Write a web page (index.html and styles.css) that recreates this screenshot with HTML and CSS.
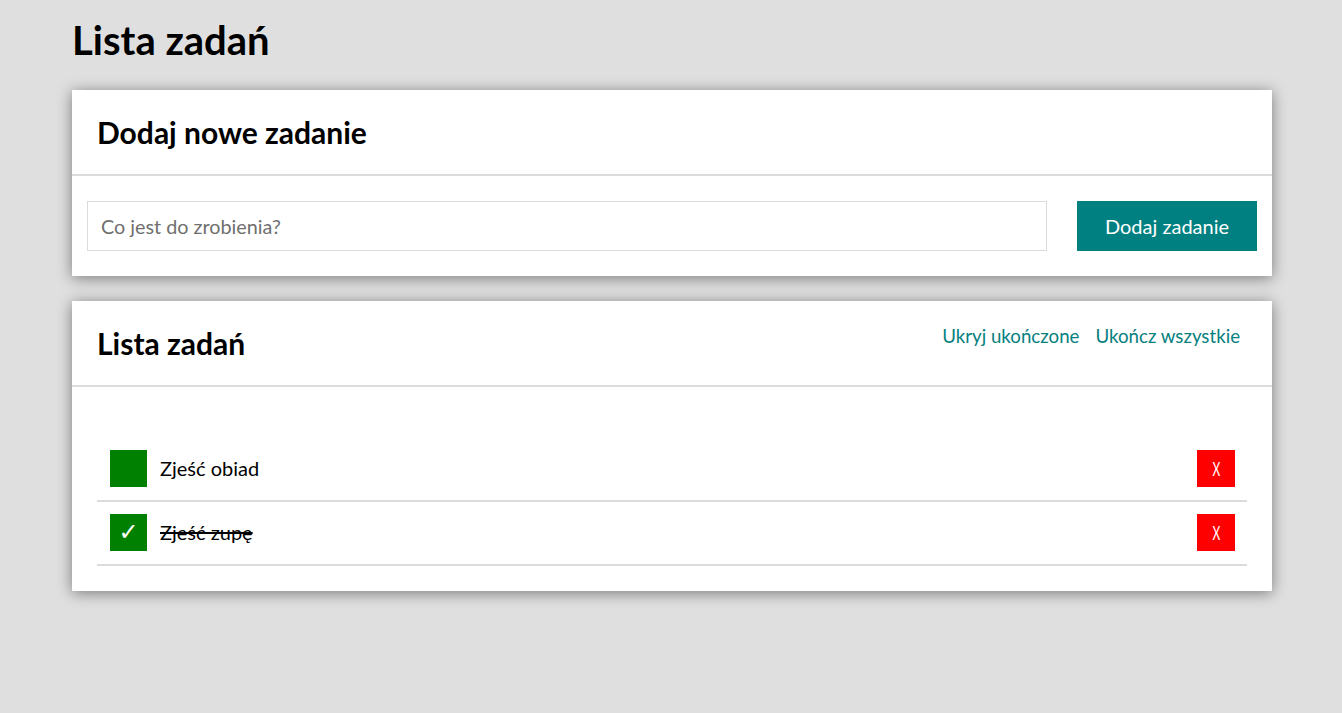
FILE: index.html
```html
<!DOCTYPE html>
<html lang="pl">
<head>
<meta charset="utf-8">
<title>Lista zadań</title>
<link rel="stylesheet" href="styles.css">
</head>
<body>
<main class="app">
  <h1 class="page-title">Lista zadań</h1>
  <section class="card">
    <header class="card-header">
      <h2 class="card-title">Dodaj nowe zadanie</h2>
    </header>
    <div class="card-body add-form">
      <input class="task-input" type="text" placeholder="Co jest do zrobienia?">
      <button class="btn-add" type="button">Dodaj zadanie</button>
    </div>
  </section>
  <section class="card">
    <header class="card-header">
      <h2 class="card-title">Lista zadań</h2>
      <nav class="actions">
        <a class="action" href="#">Ukryj ukończone</a>
        <a class="action" href="#">Ukończ wszystkie</a>
      </nav>
    </header>
    <div class="card-body list-body">
      <ul class="tasks">
        <li class="task">
          <button class="check" type="button"></button>
          <span class="task-name">Zjeść obiad</span>
          <button class="delete" type="button"><span class="x">X</span></button>
        </li>
        <li class="task done">
          <button class="check" type="button">✓</button>
          <span class="task-name">Zjeść zupę</span>
          <button class="delete" type="button"><span class="x">X</span></button>
        </li>
      </ul>
    </div>
  </section>
</main>
</body>
</html>
```
FILE: styles.css
```css
* { box-sizing: border-box; }
html, body { margin: 0; padding: 0; }
body {
  background: #dfdfdf;
  font-family: Lato, "Open Sans", sans-serif;
  color: #000;
}
.app {
  width: 1200px;
  margin: 0 0 0 72px;
  padding-top: 16px;
}
.page-title {
  margin: 0 0 26px 0;
  font-size: 40px;
  font-weight: 700;
  line-height: 48px;
}
.card {
  background: #fff;
  box-shadow: 0 2px 14px rgba(0,0,0,0.45);
  margin-bottom: 25px;
}
.card-header {
  display: flex;
  align-items: center;
  justify-content: space-between;
  height: 86px;
  padding: 0 32px 0 25px;
  border-bottom: 2px solid #dcdcdc;
}
.card-title {
  margin: 0;
  font-size: 30px;
  font-weight: 700;
}
.actions {
  display: flex;
  gap: 16px;
  margin-top: -14px;
}
.action {
  color: #078080;
  text-decoration: none;
  font-size: 18.7px;
}
.add-form {
  display: flex;
  gap: 30px;
  padding: 25px 15px;
}
.task-input {
  flex: 1;
  height: 50px;
  border: 1px solid #dcdcdc;
  padding: 0 13px;
  font-family: inherit;
  font-size: 19.8px;
  outline: none;
}
.task-input::placeholder { color: #6f6f6f; }
.btn-add {
  width: 180px;
  height: 50px;
  border: none;
  background: #008080;
  color: #fff;
  font-family: inherit;
  font-size: 20px;
}
.list-body {
  padding: 51px 25px 25px;
}
.tasks {
  list-style: none;
  margin: 0;
  padding: 0;
}
.task {
  display: flex;
  align-items: center;
  height: 64px;
  padding: 0 12px 2px 13px;
  border-bottom: 2px solid #dcdcdc;
}
.check {
  width: 37px;
  height: 37px;
  border: none;
  background: #008000;
  color: #fff;
  font-size: 24px;
  font-weight: 700;
  line-height: 37px;
  padding: 0;
  font-family: "DejaVu Sans", sans-serif;
  margin-right: 13px;
}
.task-name {
  flex: 1;
  font-size: 20px;
}
.done .task-name { text-decoration: line-through; }
.delete {
  width: 38px;
  height: 37px;
  border: none;
  background: #ff0000;
  color: #fff;
  font-family: Lato, sans-serif;
  font-size: 20px;
  padding: 0;
}
.x {
  display: inline-block;
  transform: scaleX(0.6);
}
```
